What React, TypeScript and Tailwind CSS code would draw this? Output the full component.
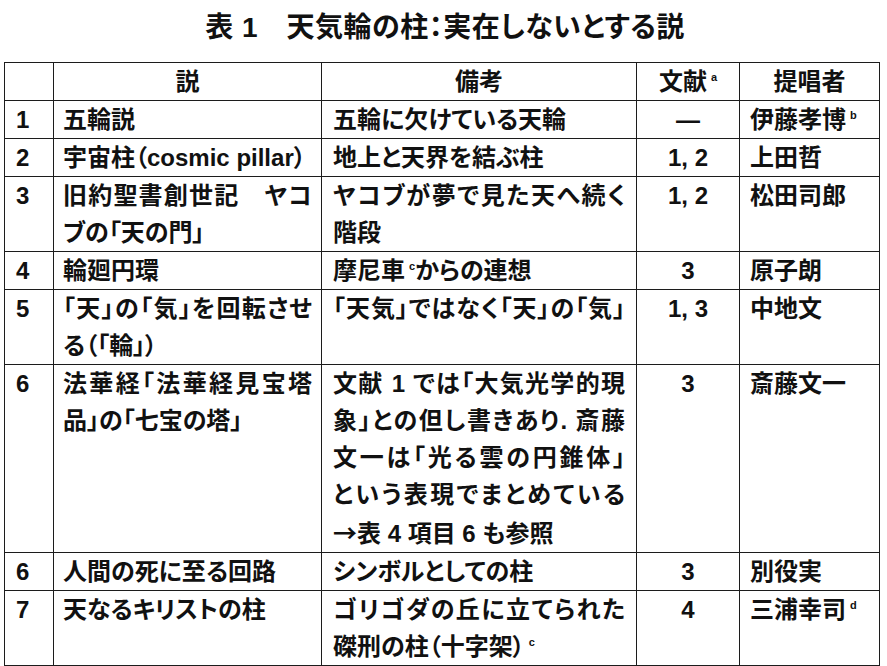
import React from "react";

type Line = { text: React.ReactNode; full?: boolean };

interface RowData {
    no: string;
    theory: Line[];
    note: Line[];
    refs: React.ReactNode;
    author: React.ReactNode;
}

// small raised footnote letter
const Sup = ({ children }: { children: React.ReactNode }) => (
    <span className="relative top-[-9px] ml-[4px] text-[11px] font-bold leading-none">{children}</span>
);

const rows: RowData[] = [
    {
        no: "1",
        theory: [{ text: "五輪説" }],
        note: [{ text: "五輪に欠けている天輪" }],
        refs: "—",
        author: (
            <>
                伊藤孝博<Sup>b</Sup>
            </>
        ),
    },
    {
        no: "2",
        theory: [{ text: "宇宙柱（cosmic pillar）" }],
        note: [{ text: "地上と天界を結ぶ柱" }],
        refs: "1, 2",
        author: "上田哲",
    },
    {
        no: "3",
        theory: [{ text: "旧約聖書創世記　ヤコ", full: true }, { text: "ブの「天の門」" }],
        note: [{ text: "ヤコブが夢で見た天へ続く", full: true }, { text: "階段" }],
        refs: "1, 2",
        author: "松田司郎",
    },
    {
        no: "4",
        theory: [{ text: "輪廻円環" }],
        note: [
            {
                text: (
                    <>
                        摩尼車<Sup>c</Sup>からの連想
                    </>
                ),
            },
        ],
        refs: "3",
        author: "原子朗",
    },
    {
        no: "5",
        theory: [{ text: "「天」の「気」を回転させ", full: true }, { text: "る（「輪」）" }],
        note: [{ text: "「天気」ではなく「天」の「気」", full: true }],
        refs: "1, 3",
        author: "中地文",
    },
    {
        no: "6",
        theory: [{ text: "法華経「法華経見宝塔", full: true }, { text: "品」の「七宝の塔」" }],
        note: [
            { text: "文献 1 では「大気光学的現", full: true },
            { text: "象」との但し書きあり. 斎藤", full: true },
            { text: "文一は「光る雲の円錐体」", full: true },
            { text: "という表現でまとめている", full: true },
            {
                text: (
                    <>
                        <span style={{ fontFamily: '"Noto Sans CJK JP", sans-serif' }}>→</span>表 4 項目 6 も参照
                    </>
                ),
            },
        ],
        refs: "3",
        author: "斎藤文一",
    },
    {
        no: "6",
        theory: [{ text: "人間の死に至る回路" }],
        note: [{ text: "シンボルとしての柱" }],
        refs: "3",
        author: "別役実",
    },
    {
        no: "7",
        theory: [{ text: "天なるキリストの柱" }],
        note: [
            { text: "ゴリゴダの丘に立てられた", full: true },
            {
                text: (
                    <>
                        磔刑の柱（十字架）<Sup>c</Sup>
                    </>
                ),
            },
        ],
        refs: "4",
        author: (
            <>
                三浦幸司<Sup>d</Sup>
            </>
        ),
    },
];

function Lines({ lines }: { lines: Line[] }) {
    return (
        <>
            {lines.map((l, i) => (
                <div
                    key={i}
                    className={
                        "whitespace-nowrap " + (l.full ? "text-justify [text-align-last:justify]" : "")
                    }
                >
                    {l.text}
                </div>
            ))}
        </>
    );
}

export default function App() {
    const cell = "border border-[#1c1c1c] align-top p-0";
    return (
        <div
            className="w-[887px] h-[666px] bg-white text-[#111] overflow-hidden [font-feature-settings:'palt']"
            style={{ fontFamily: '"Liberation Sans", "Noto Sans CJK JP", sans-serif' }}
        >
            {/* Title */}
            <div className="h-[54px] pt-[2px] flex items-center justify-center pl-[3px]">
                <h1 className="text-[28px] font-bold leading-none tracking-[0.5px]">
                    表 1　天気輪の柱：実在しないとする説
                </h1>
            </div>

            <table className="mt-[8px] ml-[4px] w-[875px] table-fixed border-collapse text-[24px] font-bold leading-[37px]">
                <colgroup>
                    <col className="w-[49px]" />
                    <col className="w-[268px]" />
                    <col className="w-[315px]" />
                    <col className="w-[103px]" />
                    <col className="w-[140px]" />
                </colgroup>
                <thead>
                    <tr>
                        <th className={cell}></th>
                        <th className={cell + " text-center"}>説</th>
                        <th className={cell + " text-center"}>備考</th>
                        <th className={cell + " text-center"}>
                            文献<Sup>a</Sup>
                        </th>
                        <th className={cell + " text-center"}>提唱者</th>
                    </tr>
                </thead>
                <tbody>
                    {rows.map((r, i) => (
                        <tr key={i}>
                            <td className={cell + " pl-[11px]"}>{r.no}</td>
                            <td className={cell + " pl-[9px] pr-[9px]"}>
                                <Lines lines={r.theory} />
                            </td>
                            <td className={cell + " pl-[11px] pr-[11px]"}>
                                <Lines lines={r.note} />
                            </td>
                            <td className={cell + " text-center"}>{r.refs}</td>
                            <td className={cell + " pl-[10px] whitespace-nowrap"}>{r.author}</td>
                        </tr>
                    ))}
                </tbody>
            </table>
        </div>
    );
}
